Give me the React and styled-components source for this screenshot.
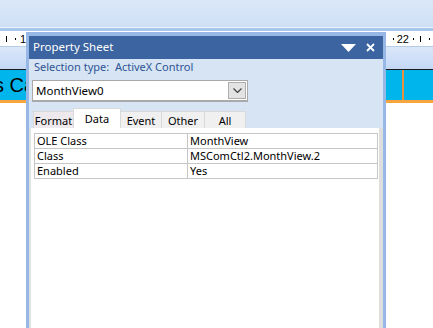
import React from "react";
import styled, { createGlobalStyle } from "styled-components";

const GlobalStyle = createGlobalStyle`
  html, body { margin: 0; padding: 0; background: #ffffff; }
  body { font-family: "Noto Sans", "DejaVu Sans", sans-serif; overflow: hidden; }
  * { box-sizing: border-box; }
`;

const Page = styled.div`
  position: relative;
  width: 433px;
  height: 328px;
  overflow: hidden;
  background: #ffffff;
  display: flex;
  flex-direction: column;
`;

const Toolbar = styled.div`
  height: 28px;
  background: linear-gradient(#dce8f9, #cedff6);
  border-bottom: 1px solid #eaf1fb;
`;

const ToolbarEdge = styled.div`
  height: 3px;
  background: #a9c6ec;
`;

const Ruler = styled.div`
  height: 16px;
  background: #ffffff;
  border-bottom: 1px solid #b4cbea;
  display: flex;
  justify-content: space-between;
  align-items: center;
  font-family: "Liberation Sans", Arial, sans-serif;
  font-size: 11px;
  color: #000;
`;

const RulerGroup = styled.div`
  display: flex;
  align-items: center;
`;

const Tick = styled.span`
  display: block;
  width: 1px;
  height: ${(p) => (p.$big ? 6 : 2)}px;
  background: #000;
  margin-left: ${(p) => p.$ml || 0}px;
  margin-right: ${(p) => p.$mr || 0}px;
`;

const RulerNum = styled.span`
  display: block;
  line-height: 12px;
  margin-left: ${(p) => p.$ml || 0}px;
`;

const SectionBand = styled.div`
  height: 22px;
  background: linear-gradient(#dbe7f9, #c3d8f6);
`;

const HeaderBand = styled.div`
  height: 34px;
  background: #00b4ec;
  border-top: 1px solid #1b1b1b;
  border-bottom: 3px solid #f7a53e;
  display: flex;
`;

const HeaderCell = styled.div`
  flex: ${(p) => (p.$fill ? 1 : "none")};
  width: ${(p) => (p.$w ? `${p.$w}px` : "auto")};
  border-left: ${(p) => (p.$line ? "2px solid #e8913a" : "none")};
  white-space: nowrap;
`;

const HeaderText = styled.span`
  display: block;
  margin-left: -6px;
  font-family: "Liberation Sans", Arial, sans-serif;
  font-size: 20px;
  line-height: 30px;
  color: #000;
`;

const Rest = styled.div`
  flex: 1;
  background: #ffffff;
`;

/* Floating property sheet window */
const Panel = styled.div`
  position: absolute;
  left: 26px;
  top: 32px;
  width: 360px;
  height: 310px;
  border: 3px solid #97b8e6;
  border-top-width: 4px;
  border-bottom: none;
  display: flex;
  flex-direction: column;
  background: #d6e4f3;
`;

const TitleBar = styled.div`
  height: 23px;
  background: #3b64a0;
  display: flex;
  align-items: center;
  padding: 0 8px 2px 4px;
  color: #ffffff;
  font-size: 11.5px;
`;

const TitleText = styled.span`
  flex: 1;
`;

const TitleIcons = styled.div`
  display: flex;
  align-items: center;
  gap: 10px;
  margin-top: 2px;
`;

const SelectionType = styled.div`
  height: 16px;
  line-height: 16px;
  margin: 0 0 0 5px;
  font-size: 11px;
  color: #2f5597;
`;

const Combo = styled.div`
  margin: 5px 0 0 3px;
  width: 216px;
  height: 22px;
  background: #ffffff;
  border: 1px solid #a9a9a9;
  border-bottom-width: 2px;
  display: flex;
  align-items: center;
  padding: 1px;
`;

const ComboText = styled.span`
  flex: 1;
  padding-left: 2px;
  font-size: 11.5px;
  color: #000;
`;

const ComboButton = styled.div`
  width: 18px;
  height: 17px;
  background: #e3e3e3;
  border: 1px solid #adadad;
  display: flex;
  align-items: center;
  justify-content: center;
`;

const Tabs = styled.div`
  margin: 6px 0 0 4px;
  height: 20px;
  display: flex;
  align-items: flex-end;
`;

const Tab = styled.div`
  width: ${(p) => p.$w}px;
  height: ${(p) => (p.$active ? 20 : 17)}px;
  background: ${(p) => (p.$active ? "#ffffff" : p.$tint || "#f0f0f0")};
  border: 1px solid #d9d9d9;
  border-bottom: none;
  margin-left: -1px;
  display: flex;
  align-items: ${(p) => (p.$active ? "flex-start" : "center")};
  justify-content: center;
  padding-top: ${(p) => (p.$active ? 2 : 0)}px;
  font-size: 11px;
  color: #000;
  &:first-child { margin-left: 0; }
`;

const GridArea = styled.div`
  flex: 1;
  background: #ffffff;
  border-left: 2px solid #e1e1e1;
  border-right: 4px solid #dedede;
  padding: 5px 0 0 3px;
`;

const Table = styled.div`
  width: 344px;
  border: 1px solid #c6c6c6;
  border-bottom: none;
`;

const Row = styled.div`
  display: grid;
  grid-template-columns: 152px 1fr;
  height: 15px;
  border-bottom: 1px solid #c6c6c6;
`;

const Cell = styled.div`
  padding-left: 2px;
  line-height: 14px;
  font-size: 11px;
  color: #000;
  white-space: nowrap;
  overflow: hidden;
  border-left: ${(p) => (p.$divider ? "1px solid #c6c6c6" : "none")};
`;

const tabs = [
  { label: "Format", w: 41, tint: "#ede9ed" },
  { label: "Data", w: 48, active: true },
  { label: "Event", w: 42 },
  { label: "Other", w: 44 },
  { label: "All", w: 42 },
];

const rows = [
  ["OLE Class", "MonthView"],
  ["Class", "MSComCtl2.MonthView.2"],
  ["Enabled", "Yes"],
];

export default function App() {
  return (
    <>
      <GlobalStyle />
      <Page>
        <Toolbar />
        <ToolbarEdge />
        <Ruler>
          <RulerGroup>
            <Tick $big $ml={6} />
            <Tick $ml={8} />
            <RulerNum $ml={4}>12</RulerNum>
          </RulerGroup>
          <RulerGroup>
            <Tick />
            <RulerNum $ml={3}>22</RulerNum>
            <Tick $ml={4} />
            <Tick $big $ml={6} />
            <Tick $ml={8} $mr={3} />
          </RulerGroup>
        </Ruler>
        <SectionBand />
        <HeaderBand>
          <HeaderCell $w={402}>
            <HeaderText>s Ca</HeaderText>
          </HeaderCell>
          <HeaderCell $fill $line />
        </HeaderBand>
        <Rest />

        <Panel>
          <TitleBar>
            <TitleText>Property Sheet</TitleText>
            <TitleIcons>
              <svg width="15" height="8" viewBox="0 0 15 8">
                <polygon points="0,0 15,0 7.5,8" fill="#ffffff" />
              </svg>
              <svg width="9" height="9" viewBox="0 0 9 9">
                <path d="M1 1 L8 8 M8 1 L1 8" stroke="#ffffff" strokeWidth="1.8" fill="none" />
              </svg>
            </TitleIcons>
          </TitleBar>
          <SelectionType>Selection type:&nbsp; ActiveX Control</SelectionType>
          <Combo>
            <ComboText>MonthView0</ComboText>
            <ComboButton>
              <svg width="9" height="5" viewBox="0 0 9 5">
                <path d="M0.5 0.5 L4.5 4.5 L8.5 0.5" stroke="#404040" strokeWidth="1.2" fill="none" />
              </svg>
            </ComboButton>
          </Combo>
          <Tabs>
            {tabs.map((t) => (
              <Tab key={t.label} $w={t.w} $active={t.active} $tint={t.tint}>
                {t.label}
              </Tab>
            ))}
          </Tabs>
          <GridArea>
            <Table>
              {rows.map(([k, v]) => (
                <Row key={k}>
                  <Cell>{k}</Cell>
                  <Cell $divider>{v}</Cell>
                </Row>
              ))}
            </Table>
          </GridArea>
        </Panel>
      </Page>
    </>
  );
}
